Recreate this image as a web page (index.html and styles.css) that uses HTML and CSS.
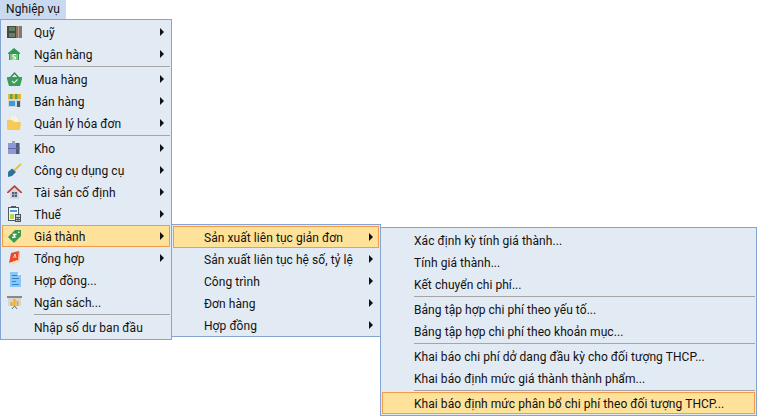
FILE: index.html
```html
<!DOCTYPE html>
<html lang="vi">
<head>
  <meta charset="UTF-8">
  <title>Nghiệp vụ</title>
  <link rel="stylesheet" href="styles.css">
</head>
<body>

<div class="tab">Nghiệp vụ</div>

<div class="cascade">
  <ul class="menu menu-main">
    <li class="item sub">
      <svg class="icon" viewBox="0 0 16 16"><rect x="0" y="2" width="15" height="12" fill="#4b4740"/><rect x="2" y="3" width="6" height="4" fill="#5f8468"/><rect x="2" y="9" width="6" height="4" fill="#5f8468"/><rect x="9" y="2" width="6" height="12" fill="#8a7566"/><rect x="11" y="2" width="1" height="12" fill="#b3a294"/></svg>
      <span>Quỹ</span>
    </li>
    <li class="item sub">
      <svg class="icon" viewBox="0 0 16 16"><path d="M7 2 L13 7 V8 H12 V14 H2 V8 H1 V7 Z" fill="#2f9a58"/><rect x="3" y="8" width="8" height="6" fill="#7cc576"/><path d="M9 8.5 H6 V11 H8.5 V13 H5.5" fill="none" stroke="#fff"/></svg>
      <span>Ngân hàng</span>
    </li>
    <li class="sep"></li>
    <li class="item sub">
      <svg class="icon" viewBox="0 0 16 16"><path d="M3 7 L7.5 2 L12 7" fill="none" stroke="#2f8a55" stroke-width="1.4"/><path d="M0 6 H15 V8 L13 15 H2 L0 8 Z" fill="#3c9c5c"/><path d="M5 10 L7 12 L10.5 8.5" fill="none" stroke="#d8f0dc" stroke-width="1.2"/></svg>
      <span>Mua hàng</span>
    </li>
    <li class="item sub">
      <svg class="icon" viewBox="0 0 16 16"><rect x="1" y="1" width="13" height="5" fill="#e9b52f"/><rect x="3" y="1" width="2.5" height="5" fill="#5aa64f"/><rect x="8" y="1" width="2.5" height="5" fill="#5aa64f"/><rect x="1" y="6" width="13" height="8" fill="#cfd6dc"/><rect x="2" y="8" width="6" height="5" fill="#3f97dc"/><rect x="10" y="8" width="3" height="6" fill="#4e5a66"/></svg>
      <span>Bán hàng</span>
    </li>
    <li class="item sub">
      <svg class="icon" viewBox="0 0 16 16"><path d="M3 0 H9 L12 3 V8 H3 Z" fill="#f5f1e4" stroke="#ddd4bc" stroke-width=".5"/><path d="M0 5 H5 L7 7 H13 L14 8 L13 15 H1 L0 14 Z" fill="#f4cb56"/></svg>
      <span>Quản lý hóa đơn</span>
    </li>
    <li class="sep"></li>
    <li class="item sub">
      <svg class="icon" viewBox="0 0 16 16"><rect x="1" y="3" width="12" height="11" fill="#8f97d6"/><rect x="9" y="3" width="3" height="11" fill="#515c78"/><rect x="1" y="8" width="12" height="1" fill="#5f6aa8"/><rect x="5" y="1" width="3" height="2" fill="#9aa2c0"/></svg>
      <span>Kho</span>
    </li>
    <li class="item sub">
      <svg class="icon" viewBox="0 0 16 16"><path d="M14 2 L7 8.5" stroke="#e8c33a" stroke-width="2"/><path d="M1 10 L5 6.5 L9 10 L5 14 L1 15 Z" fill="#2f7396"/></svg>
      <span>Công cụ dụng cụ</span>
    </li>
    <li class="item sub">
      <svg class="icon" viewBox="0 0 16 16"><path d="M3 8 L7.5 4 L12 8 V15 H3 Z" fill="#d3d6da"/><path d="M7.5 1 L15 8 V9 H13.5 L7.5 3.5 L1.5 9 H0 V8 Z" fill="#c2403a"/><path d="M5 8 H10 V13 H5 Z" fill="#4f5f80"/><path d="M7.5 8 V13 M5 10.5 H10" stroke="#c4cad6" stroke-width=".6"/></svg>
      <span>Tài sản cố định</span>
    </li>
    <li class="item sub">
      <svg class="icon" viewBox="0 0 16 16"><rect x="1.5" y="1.5" width="10" height="13" fill="#f3f6f8" stroke="#4d5a66"/><rect x="4" y="0" width="5" height="2" fill="#4d5a66"/><rect x="3" y="4" width="7" height="2" fill="#4aa0d8"/><rect x="3" y="8" width="4" height="5" fill="#bdd64a"/><rect x="8" y="8" width="6" height="8" fill="#4f5356"/><rect x="9" y="9" width="4" height="2" fill="#b9d0d8"/><path d="M9 12.5 H13 M9 14.5 H13" stroke="#d0d4d6" stroke-dasharray="1 .5"/></svg>
      <span>Thuế</span>
    </li>
    <li class="item sub active">
      <svg class="icon" viewBox="0 0 16 16"><path d="M8 2 H14 V8 L7 15 L1 9 Z" fill="#3c9a4e"/><rect x="11" y="3.5" width="1.5" height="1.5" fill="#d6f0d8"/><path d="M9.5 6.5 L6.5 6.5 L8 9 L5 9.5" fill="none" stroke="#fff" stroke-width="1.3"/></svg>
      <span>Giá thành</span>
    </li>
    <li class="item sub">
      <svg class="icon" viewBox="0 0 16 16"><path d="M4 3 L12 1 L11 10 L2 13 Z" fill="#e8482c"/><path d="M2 13 L11 10 L12 12 L4 15 Z" fill="#f6dcb8"/><path d="M12 1 L13 3 L12 12 L11 10 Z" fill="#f4b078"/><path d="M6.5 8 L8 4 L9 8" fill="none" stroke="#f9d8b8"/></svg>
      <span>Tổng hợp</span>
    </li>
    <li class="item">
      <svg class="icon" viewBox="0 0 16 16"><path d="M3 0 H11 L14 3 V15 H3 Z" fill="#8cc6f4"/><path d="M11 0 L14 3 H11 Z" fill="#fff"/><path d="M5 3.5 H10 M5 6.5 H12 M5 9.5 H9 M5 12.5 H12" stroke="#2a86d4"/></svg>
      <span>Hợp đồng...</span>
    </li>
    <li class="item">
      <svg class="icon" viewBox="0 0 16 16"><rect x="0" y="2" width="15" height="2" fill="#8a8a80"/><rect x="1" y="4" width="13" height="8" fill="#d5d8d2"/><rect x="3.5" y="8" width="2" height="4" fill="#f2a81e"/><rect x="6.5" y="5" width="2" height="7" fill="#f2a81e"/><rect x="9.5" y="7" width="2" height="5" fill="#f2a81e"/><path d="M7.5 12 L5 15 M7.5 12 L10 15" stroke="#6b6f68"/></svg>
      <span>Ngân sách...</span>
    </li>
    <li class="sep"></li>
    <li class="item"><span>Nhập số dư ban đầu</span></li>
  </ul>

  <ul class="menu menu-second">
    <li class="item sub active"><span>Sản xuất liên tục giản đơn</span></li>
    <li class="item sub"><span>Sản xuất liên tục hệ số, tỷ lệ</span></li>
    <li class="item sub"><span>Công trình</span></li>
    <li class="item sub"><span>Đơn hàng</span></li>
    <li class="item sub"><span>Hợp đồng</span></li>
  </ul>

  <ul class="menu menu-third">
    <li class="item"><span>Xác định kỳ tính giá thành...</span></li>
    <li class="item"><span>Tính giá thành...</span></li>
    <li class="item"><span>Kết chuyển chi phí...</span></li>
    <li class="sep"></li>
    <li class="item"><span>Bảng tập hợp chi phí theo yếu tố...</span></li>
    <li class="item"><span>Bảng tập hợp chi phí theo khoản mục...</span></li>
    <li class="sep"></li>
    <li class="item"><span>Khai báo chi phí dở dang đầu kỳ cho đối tượng THCP...</span></li>
    <li class="item"><span>Khai báo định mức giá thành thành phẩm...</span></li>
    <li class="sep"></li>
    <li class="item active"><span>Khai báo định mức phân bổ chi phí theo đối tượng THCP...</span></li>
  </ul>
</div>

</body>
</html>
```

FILE: styles.css
```css
html, body {
  margin: 0;
  padding: 0;
  height: 416px;
  overflow: hidden;
  background: #fff;
}

body {
  font-family: Roboto, "Noto Sans", sans-serif;
  font-size: 12px;
  letter-spacing: 0.06px;
  color: #111;
}

.tab {
  width: 66px;
  height: 19px;
  line-height: 19px;
  text-align: center;
  background: #c9daf0;
}

.cascade {
  position: relative;
}

.menu {
  box-sizing: border-box;
  margin: 0;
  padding: 1px;
  list-style: none;
  background: #e2eaf4;
  border: 1px solid #82a5d4;
}

.menu-main {
  width: 172px;
  height: 321px;
}

/* the flyouts sit over the parent menu */
.menu-second {
  position: absolute;
  left: 171px;
  top: 205px;
  width: 210px;
  height: 113px;
}

.menu-second .item { padding-left: 31px; }
.menu-second .active { padding-left: 30px; }

.menu-third {
  position: absolute;
  left: 380px;
  top: 208px;
  width: 377px;
  height: 189px;
}

.item {
  box-sizing: border-box;
  position: relative;
  display: flex;
  align-items: center;
  height: 22px;
  padding-left: 32px;
  padding-top: 2px;
  white-space: nowrap;
}

.icon {
  position: absolute;
  left: 5px;
  top: 3px;
  width: 16px;
  height: 16px;
}

.sub::after {
  content: "";
  position: absolute;
  right: 6px;
  top: 7px;
  border-left: 4px solid #111;
  border-top: 4px solid transparent;
  border-bottom: 4px solid transparent;
}

.active {
  background: #ffe29a;
  border: 1px solid #f59a4a;
  padding-left: 31px;
  padding-top: 1px;
}

.active .icon { left: 4px; top: 2px; }
.active.sub::after { right: 5px; top: 6px; }

.sep {
  height: 1px;
  margin: 1px 0 1px 32px;
  background: #a5a5a5;
}
```
